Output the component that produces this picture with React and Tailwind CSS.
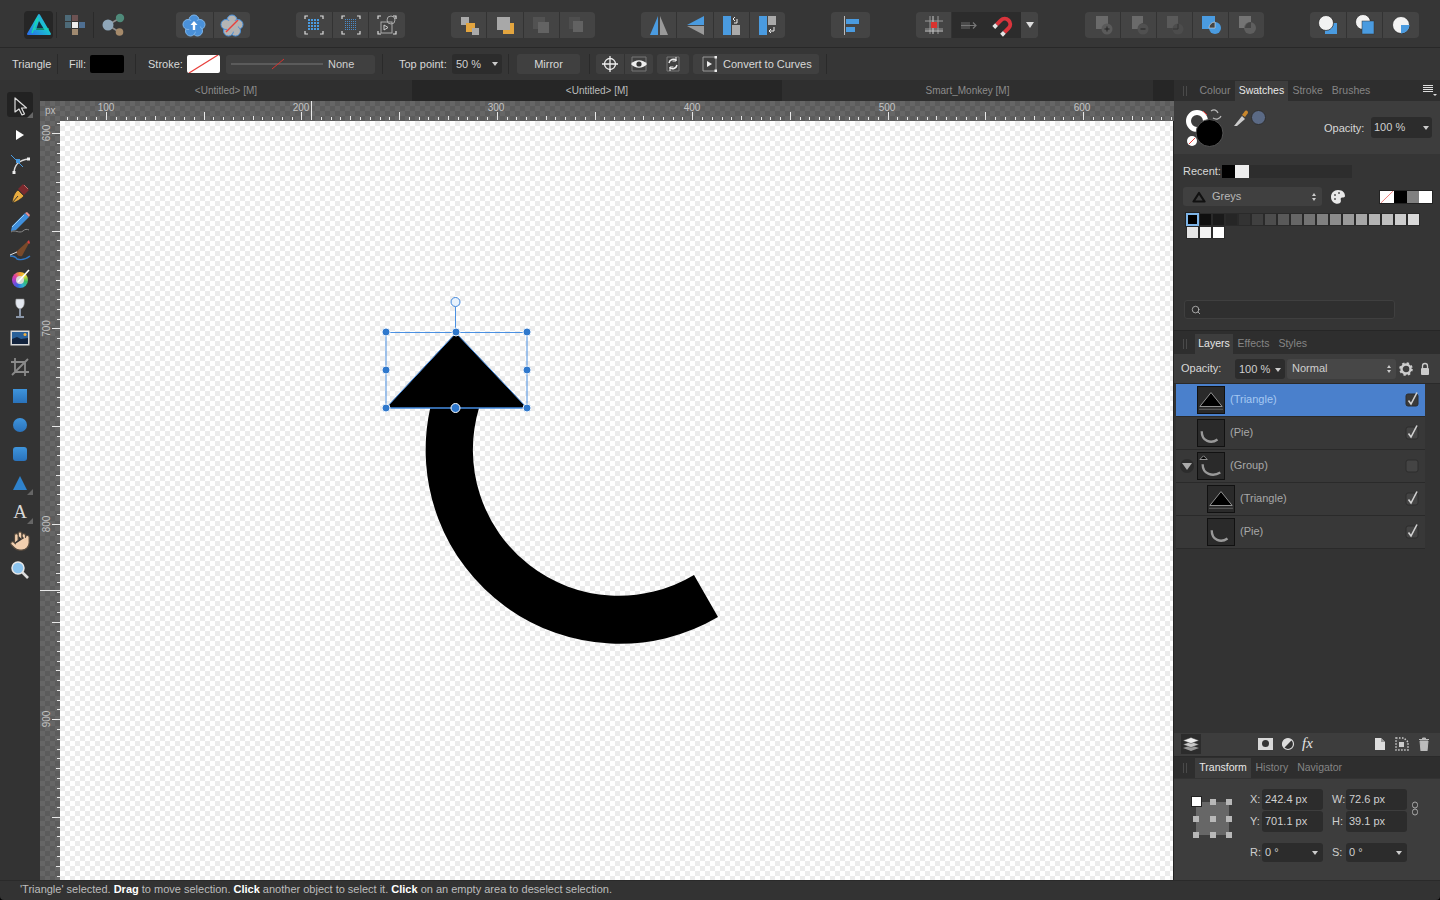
import React from "react";
import { Hand, Search } from "lucide-react";

const Ico = ({ children, w = 24, h = 24, className = "" }) => (
  <svg width={w} height={h} viewBox={`0 0 ${w} ${h}`} className={className}>
    {children}
  </svg>
);

const Dots = ({ step = 3, fill = "#4a9be0" }) => {
  const out = [];
  for (let x = 6; x <= 17; x += step) {
    for (let y = 6; y <= 17; y += step) {
      out.push(<rect key={`${x}-${y}`} x={x} y={y} width={step - 1} height={step - 1} fill={fill} />);
    }
  }
  return out;
};

const Brackets = () => (
  <path d="M3 6V3h3M18 3h3v3M21 18v3h-3M6 21H3v-3" fill="none" stroke="#ddd" strokeWidth="1.2" />
);

const Flower = ({ fill, stroke, children }) => (
  <Ico>
    <g fill={fill} stroke={stroke} strokeWidth="1">
      <circle cx="12" cy="7" r="5" />
      <circle cx="18" cy="11.5" r="5" />
      <circle cx="15.5" cy="18" r="5" />
      <circle cx="8.5" cy="18" r="5" />
      <circle cx="6" cy="11.5" r="5" />
    </g>
    <circle cx="12" cy="13" r="6" fill={fill} />
    {children}
  </Ico>
);

const Btn = ({ children, className = "" }) => (
  <div className={`flex-1 flex items-center justify-center border-r last:border-r-0 border-[#333] ${className}`}>
    {children}
  </div>
);

const Group = ({ className = "", children }) => (
  <div className={`flex h-[26px] shrink-0 rounded-[4px] bg-[#444] overflow-hidden ${className}`}>{children}</div>
);

const TopBar = () => (
  <div className="flex items-center h-[48px] pt-[2px] shrink-0 border-b border-[#282828] bg-[#363636]">
    <div className="ml-[24px] w-[29px] h-[28px] shrink-0 flex items-center justify-center rounded-[4px] bg-[#262626]">
      <Ico w={26} h={24}>
        <defs>
          <linearGradient id="logo" x1="0" y1="1" x2="1" y2="0">
            <stop offset="0" stopColor="#2a6fe8" />
            <stop offset="0.55" stopColor="#19c4d0" />
            <stop offset="1" stopColor="#3a9ae8" />
          </linearGradient>
        </defs>
        <path d="M13 2 24 21H2Z" fill="url(#logo)" stroke="url(#logo)" strokeWidth="2" strokeLinejoin="round" />
        <path d="M13 8 18.500 17H10Z" fill="#12303f" />
        <path d="M12 5 6 20M8 16h15" fill="none" stroke="#14e0a8" strokeWidth="1.200" />
      </Ico>
    </div>
    <div className="ml-[3px] w-px h-[26px] bg-[#2a2a2a]" />
    <div className="ml-[5px] w-[26px] h-[26px] shrink-0 flex items-center justify-center">
      <Ico>
        <rect x="9" y="2" width="6" height="6" fill="#6d5252" />
        <rect x="2" y="9" width="6" height="6" fill="#4d6a78" />
        <rect x="2" y="2" width="6" height="6" fill="#4d6a78" />
        <rect x="9" y="9" width="6" height="6" fill="#eee" />
        <rect x="16" y="9" width="6" height="6" fill="#4f6f92" />
        <rect x="9" y="16" width="6" height="6" fill="#a08a70" />
      </Ico>
    </div>
    <div className="ml-[5px] w-px h-[26px] bg-[#2a2a2a]" />
    <div className="ml-[5px] w-[28px] h-[26px] shrink-0 flex items-center justify-center">
      <Ico w={26} h={26}>
        <path d="M8 13 20 6M8 13l11 7" stroke="#8c8c8c" strokeWidth="1.5" />
        <circle cx="8" cy="13" r="5.5" fill="#8fa6b8" />
        <circle cx="20" cy="6" r="4.2" fill="#4f8a7a" />
        <circle cx="19.5" cy="20" r="3.8" fill="#a58a6a" />
      </Ico>
    </div>

    <Group className="ml-[49px] w-[74px]">
      <Btn>
        <Flower fill="#4a90d8" stroke="#7db4e8">
          <path d="M12 8l3.5 4H13.2v5h-2.4v-5H8.500Z" fill="#fff" />
        </Flower>
      </Btn>
      <Btn>
        <Flower fill="#b4b4b4" stroke="#4a90d8">
          <path d="M6 19 18 7" stroke="#e8403c" strokeWidth="1.5" />
        </Flower>
      </Btn>
    </Group>

    <Group className="ml-[46px] w-[109px]">
      <Btn>
        <Ico><Brackets /><Dots /></Ico>
      </Btn>
      <Btn>
        <Ico><Brackets /><Dots step={2} fill="#4a8ac8" /></Ico>
      </Btn>
      <Btn>
        <Ico>
          <Brackets />
          <rect x="6" y="9" width="11" height="11" fill="none" stroke="#aaa" />
          <circle cx="16" cy="7" r="4" fill="none" stroke="#aaa" />
          <path d="M9 12v5l4-2.500Z" fill="none" stroke="#ccc" />
        </Ico>
      </Btn>
    </Group>

    <Group className="ml-[46px] w-[144px]">
      <Btn>
        <Ico>
          <rect x="4" y="4" width="8" height="8" fill="#aaa" />
          <rect x="9" y="10" width="9" height="9" fill="#e3a53f" />
          <rect x="15" y="15" width="7" height="7" fill="#aaa" />
        </Ico>
      </Btn>
      <Btn>
        <Ico>
          <rect x="10" y="10" width="11" height="11" fill="#e3a53f" />
          <rect x="4" y="4" width="13" height="13" fill="#a8a8a8" />
        </Ico>
      </Btn>
      <Btn>
        <Ico>
          <rect x="4" y="4" width="12" height="12" fill="#525252" />
          <rect x="9" y="9" width="11" height="11" fill="#636363" />
        </Ico>
      </Btn>
      <Btn>
        <Ico>
          <path d="M4 4h11v4H8v8H4Z" fill="#4e4e4e" />
          <rect x="8" y="8" width="10" height="11" fill="#626262" />
        </Ico>
      </Btn>
    </Group>

    <Group className="ml-[46px] w-[144px]">
      <Btn>
        <Ico>
          <path d="M11 3v19H3Z" fill="#4a9be0" />
          <path d="M13 3v19h8Z" fill="#9a9a9a" />
        </Ico>
      </Btn>
      <Btn>
        <Ico>
          <path d="M21 3v9H4Z" fill="#4a9be0" />
          <path d="M21 13v9L4 13Z" fill="#9a9a9a" />
        </Ico>
      </Btn>
      <Btn>
        <Ico>
          <rect x="4" y="3" width="8" height="19" fill="#4a9be0" />
          <rect x="13" y="12" width="8" height="10" fill="#aaa" />
          <path d="M15 9h3V5M16 3l-2 2 2 2" transform="translate(0 1)" fill="none" stroke="#eee" />
        </Ico>
      </Btn>
      <Btn>
        <Ico>
          <rect x="4" y="3" width="8" height="19" fill="#4a9be0" />
          <rect x="13" y="3" width="8" height="9" fill="#aaa" />
          <path d="M19 14v4h-4M16 16l-2 2 2 2" fill="none" stroke="#eee" />
        </Ico>
      </Btn>
    </Group>

    <Group className="ml-[46px] w-[39px]">
      <Btn>
        <Ico>
          <path d="M5.500 3v19" stroke="#bbb" />
          <rect x="7" y="6" width="13" height="5" fill="#4a9be0" />
          <rect x="7" y="14" width="9" height="5" fill="#4a9be0" />
        </Ico>
      </Btn>
    </Group>

    <Group className="ml-[46px] w-[122px]">
      <div className="w-[36px] flex items-center justify-center border-r border-[#333]">
        <Ico>
          <path d="M8 3v18M16 3v18M3 8h18M3 16h18" stroke="#999" />
          <path d="M3 18h18M11 3v18" stroke="#ccc" />
          <rect x="9" y="9" width="6" height="6" fill="#d8322e" />
        </Ico>
      </div>
      <div className="w-[34px] flex items-center justify-center bg-[#2c2c2c]">
        <Ico>
          <rect x="4" y="9" width="9" height="7" fill="#4a4a4a" />
          <path d="M4 12.500h15M16 9.500l3 3-3 3" fill="none" stroke="#777" strokeWidth="1.2" />
        </Ico>
      </div>
      <div className="w-[35px] flex items-center justify-center bg-[#2c2c2c]">
        <Ico>
          <g transform="rotate(-135 12 12)" fill="none" strokeWidth="4">
            <path d="M6.500 7v6a5.500 5.500 0 0 0 11 0V7" stroke="#d9343c" />
            <path d="M6.500 3v4M17.500 3v4" stroke="#e4e4e4" />
          </g>
        </Ico>
      </div>
      <div className="flex-1 flex items-center justify-center bg-[#444]">
        <div className="w-0 h-0 border-x-[4px] border-x-transparent border-t-[6px] border-t-[#ddd]" />
      </div>
    </Group>

    <Group className="ml-[47px] w-[179px]">
      <Btn>
        <Ico>
          <rect x="5" y="3" width="12" height="13" fill="#6a6a6a" />
          <circle cx="16" cy="16" r="5.500" fill="#5a5a5a" />
          <path d="M13.500 16h5M16 13.500v5" stroke="#222" />
        </Ico>
      </Btn>
      <Btn>
        <Ico>
          <path d="M5 3h11v7a6 6 0 0 0-5 6H5Z" fill="#6a6a6a" />
          <circle cx="16" cy="16" r="5.500" fill="#505050" />
          <path d="M13.500 16h5" stroke="#222" />
        </Ico>
      </Btn>
      <Btn>
        <Ico>
          <rect x="4" y="3" width="11" height="12" fill="#5a5a5a" />
          <circle cx="15" cy="16" r="5.500" fill="#4c4c4c" />
          <path d="M15 11v5h-5" fill="none" stroke="#333" />
        </Ico>
      </Btn>
      <Btn>
        <Ico>
          <rect x="3" y="3" width="13" height="13" fill="#4a9be0" />
          <circle cx="16" cy="15" r="6" fill="#4a9be0" />
          <path d="M10 15a6 6 0 0 1 6-6v6Z" fill="#444" stroke="#ddd" strokeWidth=".6" />
        </Ico>
      </Btn>
      <Btn>
        <Ico>
          <rect x="4" y="3" width="12" height="12" fill="#747474" />
          <circle cx="15" cy="15" r="6" fill="#5e5e5e" />
          <path d="M10 15a6 6 0 0 1 6-6v6Z" fill="#444" />
        </Ico>
      </Btn>
    </Group>

    <Group className="ml-[46px] w-[109px]">
      <Btn>
        <Ico>
          <rect x="9" y="10" width="12" height="11" fill="#4a9be0" />
          <circle cx="10" cy="10" r="7.500" fill="#f2f2f2" stroke="#222" strokeWidth=".7" />
        </Ico>
      </Btn>
      <Btn>
        <Ico>
          <circle cx="10" cy="9" r="7.500" fill="#f2f2f2" stroke="#222" strokeWidth=".7" />
          <rect x="9" y="8" width="12" height="13" fill="#4a9be0" stroke="#333" strokeWidth=".5" />
        </Ico>
      </Btn>
      <Btn>
        <Ico>
          <circle cx="12" cy="12" r="8.500" fill="#f2f2f2" stroke="#222" strokeWidth=".7" />
          <path d="M12 12h8.500a8.500 8.500 0 0 1-8.500 8.500Z" fill="#4a9be0" />
        </Ico>
      </Btn>
    </Group>
  </div>
);

const Sep = ({ className = "" }) => <div className={`w-px h-[20px] shrink-0 bg-[#2a2a2a] ${className}`} />;
const Lab = ({ className = "", children }) => (
  <span className={`shrink-0 whitespace-nowrap text-[11px] text-[#d8d8d8] ${className}`}>{children}</span>
);
const Caret = ({ className = "" }) => (
  <div className={`w-0 h-0 border-x-[3px] border-x-transparent border-t-[4px] border-t-[#ccc] ${className}`} />
);

const NoneSwatch = ({ className = "" }) => (
  <svg viewBox="0 0 33 17" preserveAspectRatio="none" className={`bg-white shrink-0 ${className}`}>
    <path d="M2 17 31 0" stroke="#e8403c" strokeWidth="1.2" />
  </svg>
);

const ContextBar = () => (
  <div className="flex items-center h-[32px] shrink-0 bg-[#363636]">
    <Lab className="ml-[12px] w-[38px]">Triangle</Lab>
    <Sep className="ml-[7px]" />
    <Lab className="ml-[11px] w-[17px]">Fill:</Lab>
    <div className="ml-[4px] w-[34px] h-[18px] shrink-0 bg-black rounded-[2px]" />
    <Sep className="ml-[11px]" />
    <Lab className="ml-[12px] w-[34px]">Stroke:</Lab>
    <NoneSwatch className="ml-[5px] w-[33px] h-[18px] rounded-[2px]" />
    <div className="ml-[6px] w-[149px] h-[19px] shrink-0 flex items-center rounded-[3px] bg-[#404040]">
      <svg width="97" height="12" className="ml-[5px]">
        <path d="M0 6h92" stroke="#777" />
        <path d="M41 11 53 1" stroke="#d8322e" />
      </svg>
      <span className="text-[11px] text-[#d0d0d0]">None</span>
    </div>
    <Sep className="ml-[7px]" />
    <Lab className="ml-[16px] w-[48px]">Top point:</Lab>
    <div className="ml-[5px] w-[50px] h-[20px] shrink-0 flex items-center justify-between rounded-[3px] bg-[#2c2c2c] pl-[4px] pr-[4px]">
      <span className="text-[11px] text-[#d0d0d0]">50 %</span>
      <Caret />
    </div>
    <Sep className="ml-[6px]" />
    <div className="ml-[8px] w-[63px] h-[20px] shrink-0 flex items-center justify-center rounded-[3px] bg-[#404040] text-[11px] text-[#d8d8d8]">
      Mirror
    </div>
    <Sep className="ml-[9px]" />
    <div className="ml-[6px] w-[57px] h-[20px] shrink-0 flex rounded-[3px] bg-[#404040] divide-x divide-[#333]">
      <div className="flex-1 flex items-center justify-center">
        <Ico w={18} h={18}>
          <circle cx="9" cy="9" r="5.500" fill="none" stroke="#eee" strokeWidth="1.3" />
          <path d="M9 1v16M1 9h16" stroke="#eee" strokeWidth="1.3" />
        </Ico>
      </div>
      <div className="flex-1 flex items-center justify-center">
        <Ico w={18} h={18}>
          <path d="M2 2h14v14H2Z" fill="none" stroke="#777" />
          <path d="M1 9c4-5 12-5 16 0-4 5-12 5-16 0Z" fill="#eee" />
          <circle cx="9" cy="9" r="2.600" fill="#333" />
        </Ico>
      </div>
    </div>
    <div className="ml-[4px] w-[32px] h-[20px] shrink-0 flex items-center justify-center rounded-[3px] bg-[#404040]">
      <Ico w={18} h={18}>
        <path d="M3 2h12v14H3Z" fill="none" stroke="#777" />
        <path d="M5 8a4.500 4.500 0 0 1 7.500-2.500M13 10a4.500 4.500 0 0 1-7.500 2.500" fill="none" stroke="#eee" strokeWidth="1.500" />
        <path d="M12 2v4H8.500M6 16v-4h3.500" fill="none" stroke="#eee" />
      </Ico>
    </div>
    <div className="ml-[4px] w-[126px] h-[20px] shrink-0 flex items-center rounded-[3px] bg-[#404040]">
      <Ico w={18} h={18} className="ml-[8px]">
        <path d="M2 2h13M2 16h13M2 2v14M15 2v14" fill="none" stroke="#999" />
        <rect x="13.500" y="1" width="2.500" height="2.500" fill="#eee" />
        <rect x="13.500" y="14.500" width="2.500" height="2.500" fill="#eee" />
        <path d="M6 6v6l5-3Z" fill="#eee" />
      </Ico>
      <span className="ml-[4px] text-[11px] whitespace-nowrap text-[#d8d8d8]">Convert to Curves</span>
    </div>
    <Sep className="ml-[7px]" />
  </div>
);

const Tool = ({ children, active, corner }) => (
  <div className="relative h-[29px] flex items-center justify-center">
    {active && <div className="absolute left-[7px] top-[1px] w-[26px] h-[25px] rounded-[3px] bg-[#222]" />}
    <div className="relative flex">{children}</div>
    {corner && (
      <div className="absolute right-[7px] bottom-[2px] w-0 h-0 border-l-[6px] border-l-transparent border-b-[6px] border-b-[#666]" />
    )}
  </div>
);

const Toolbar = () => (
  <div className="w-[40px] shrink-0 flex flex-col pt-[11px] bg-[#333]">
    <Tool active corner>
      <Ico w={20} h={20}>
        <path d="M5 2v14l4-3 3 6 2.500-1-3-6h5Z" fill="#222" stroke="#ddd" strokeWidth="1.200" strokeLinejoin="round" />
      </Ico>
    </Tool>
    <Tool>
      <Ico w={20} h={20}>
        <path d="M6 5v10l8-5Z" fill="#fff" />
      </Ico>
    </Tool>
    <Tool>
      <Ico w={22} h={22}>
        <path d="M5 21c0-9 4-14 15-15" fill="none" stroke="#ddd" strokeWidth="1.500" />
        <path d="M2 2l12 12" stroke="#4a9be0" />
        <rect x="7" y="6" width="4" height="4" fill="#4a9be0" />
        <rect x="3.500" y="18" width="3" height="3" fill="#eee" />
        <rect x="18" y="4.500" width="3" height="3" fill="#eee" />
      </Ico>
    </Tool>
    <Tool>
      <Ico>
        <path d="M4 22C5 15 7 11 10 9l6 6c-3 3-7 6-12 7Z" fill="#e8ac40" stroke="#222" strokeWidth=".7" />
        <path d="M4 22l6-7" stroke="#333" />
        <path d="M10 8l5-5 6 6-5 5Z" fill="#7a2a2e" />
        <path d="M16 4l4 4" stroke="#c46a6a" />
      </Ico>
    </Tool>
    <Tool>
      <Ico>
        <path d="M4 16 17 3l4 4L8 20l-5 1Z" fill="#3f8fdc" />
        <path d="M17 3l4 4 1-2-3-3Z" fill="#e89090" />
        <path d="M4 17 16 5" stroke="#9fd0f5" />
        <path d="M3 22c4-3 8 2 12-1 2-2 4-2 6-1" fill="none" stroke="#888" />
      </Ico>
    </Tool>
    <Tool>
      <Ico>
        <path d="M8 13 19 3l2 1-7 13c-3 1-5-1-6-4Z" fill="#7a4a2a" />
        <path d="M19 3l2-2 1 3-1 1Z" fill="#d84040" />
        <path d="M2 17c3 0 6 1 7 3 3 1 8 1 13-3" fill="none" stroke="#2f78c8" strokeWidth="1.400" />
        <path d="M2 16l7-3" stroke="#ddd" />
      </Ico>
    </Tool>
    <Tool>
      <div className="relative w-[16px] h-[16px] rounded-full bg-[image:conic-gradient(#f0a030,#e8e040,#38c060,#30b0d0,#3a60e0,#a040d0,#e040a0,#f0a030)]">
        <div className="absolute inset-[4px] rounded-full bg-[#d8d8d8]" />
        <svg width="20" height="20" className="absolute left-[3px] -top-[5px]">
          <path d="M3 15 14 3" stroke="#fff" strokeWidth="1.600" />
        </svg>
      </div>
    </Tool>
    <Tool>
      <Ico>
        <path d="M8 2h8c1 5 0 9-4 10-4-1-5-5-4-10Z" fill="#e4e8f0" stroke="#888" strokeWidth=".6" />
        <path d="M12 12v7M8 20h8" stroke="#8a96a8" strokeWidth="2" />
      </Ico>
    </Tool>
    <Tool>
      <Ico w={20} h={16}>
        <rect x=".5" y=".5" width="19" height="15" fill="#d8d8d8" />
        <rect x="2" y="2" width="16" height="12" fill="#2a6098" />
        <path d="M2 9l5-2 4 2 7-1v6H2Z" fill="#12233d" />
        <circle cx="15" cy="4.500" r="1.500" fill="#f0b040" />
      </Ico>
    </Tool>
    <Tool>
      <Ico w={20} h={20}>
        <path d="M5 1v14h14M1 5h14v14M2 18 18 2" fill="none" stroke="#8a8a8a" strokeWidth="1.800" />
      </Ico>
    </Tool>
    <Tool>
      <div className="w-[14px] h-[14px] bg-gradient-to-b from-[#3f95dd] to-[#2a72bb]" />
    </Tool>
    <Tool>
      <div className="w-[14px] h-[14px] rounded-full bg-gradient-to-b from-[#3f95dd] to-[#2a72bb]" />
    </Tool>
    <Tool>
      <div className="w-[14px] h-[14px] rounded-[3px] bg-gradient-to-b from-[#3f95dd] to-[#2a72bb]" />
    </Tool>
    <Tool corner>
      <div className="w-0 h-0 border-x-[7px] border-x-transparent border-b-[14px] border-b-[#2f82cc]" />
    </Tool>
    <Tool corner>
      <span className="font-['Liberation_Serif',serif] text-[19px] leading-none text-[#d8d8d8]">A</span>
    </Tool>
    <Tool>
      <Hand size={22} fill="#f2cfae" stroke="#54483c" strokeWidth={1.300} />
    </Tool>
    <Tool>
      <Ico w={20} h={20}>
        <path d="M12 12l6 6" stroke="#ddd" strokeWidth="2.600" />
        <circle cx="8" cy="8" r="6" fill="#8cc4ee" stroke="#e8e8e8" strokeWidth="1.500" />
      </Ico>
    </Tool>
  </div>
);

const TOP_LABELS = [
  [106, "100"],
  [301, "200"],
  [496, "300"],
  [692, "400"],
  [887, "500"],
  [1082, "600"],
];
const SIDE_LABELS = [
  [133, "600"],
  [328.5, "700"],
  [524, "800"],
  [719, "900"],
];
const tickSize = (i) => (i % 10 === 0 ? 8 : i % 5 === 0 ? 4 : 3);

const TopRuler = () => (
  <svg className="flex-1 block" height="20" viewBox="60 101 1114 20" preserveAspectRatio="xMinYMin slice">
    {Array.from({ length: 116 }, (_, i) => {
      const x = Math.round(106 + (i - 5) * 9.77) + 0.5;
      return <path key={i} d={`M${x} 120V${120 - tickSize(i - 5 + 100)}`} stroke="#e8e8e8" />;
    })}
    <path d="M311.500 101v19" stroke="#e8e8e8" />
    {TOP_LABELS.map(([x, t]) => (
      <text key={t} x={x} y="111" textAnchor="middle" fontSize="10" fill="#c4c4c4">
        {t}
      </text>
    ))}
  </svg>
);

const SideRuler = () => (
  <div className="w-[20px] shrink-0 bg-[#606060] bg-[image:repeating-conic-gradient(#5c5c5c_0_25%,#666_0_50%)] bg-[length:10px_10px] overflow-hidden">
    <svg width="20" height="758" viewBox="40 121 20 758" className="block">
      {Array.from({ length: 78 }, (_, i) => {
        const y = Math.round(133 + (i - 1) * 9.77) + 0.5;
        return <path key={i} d={`M60 ${y}H${60 - tickSize(i - 1 + 100)}`} stroke="#e8e8e8" />;
      })}
      <path d="M40 590.500h20" stroke="#e8e8e8" />
      {SIDE_LABELS.map(([y, t]) => (
        <text key={t} x="50" y={y} textAnchor="middle" fontSize="10" fill="#c4c4c4" transform={`rotate(-90 50 ${y})`}>
          {t}
        </text>
      ))}
    </svg>
  </div>
);

const HANDLES = [
  [386, 332],
  [456, 332],
  [527, 332],
  [386, 370],
  [527, 370],
  [386, 408],
  [527, 408],
];

const Canvas = () => (
  <div className="relative flex-1 bg-white bg-[image:repeating-conic-gradient(#ececec_0_25%,#fff_0_50%)] bg-[length:10px_10px]">
    <svg className="absolute inset-0" width="1113" height="758" viewBox="60 121 1113 758">
      <path d="M430.200 408A194 194 0 0 0 718 617L694 575A146 146 0 0 1 479 408Z" fill="#000" />
      <path d="M456 333 386 408H527Z" fill="#000" stroke="#3f86dc" />
      <rect x="386" y="332.500" width="141" height="75.500" fill="none" stroke="#4a90e2" />
      <path d="M455.500 307v25" stroke="#4a90e2" />
      <circle cx="455.500" cy="302" r="4.500" fill="#e8f2fc" stroke="#3f86dc" />
      {HANDLES.map(([x, y]) => (
        <circle key={`${x}-${y}`} cx={x} cy={y} r="4" fill="#2f78cc" stroke="#eef4fc" />
      ))}
      <circle cx="455.500" cy="408" r="4.500" fill="#2f78cc" stroke="#fff" />
    </svg>
  </div>
);

const DocArea = () => (
  <div className="flex-1 flex flex-col min-w-0">
    <div className="flex h-[21px] shrink-0 bg-[#262626] text-[10px] text-center leading-[21px]">
      <div className="w-[372px] bg-[#2f2f2f] text-[#8c8c8c]">&lt;Untitled&gt; [M]</div>
      <div className="w-[370px] text-[#bcbcbc]">&lt;Untitled&gt; [M]</div>
      <div className="w-[371px] bg-[#2f2f2f] text-[#8c8c8c]">Smart_Monkey [M]</div>
    </div>
    <div className="flex h-[20px] shrink-0 bg-[#606060] bg-[image:repeating-conic-gradient(#5c5c5c_0_25%,#666_0_50%)] bg-[length:10px_10px]">
      <div className="w-[20px] shrink-0 pl-[5px] text-[10px] leading-[20px] text-[#c0c0c0]">px</div>
      <TopRuler />
    </div>
    <div className="flex flex-1 min-h-0 border-r border-[#222]">
      <SideRuler />
      <Canvas />
    </div>
  </div>
);

const PanelTabs = ({ tabs, active, activeWidth, className = "" }) => (
  <div className={`flex items-end h-[21px] shrink-0 bg-[#2e2e2e] text-[10.500px] ${className}`}>
    <div className="ml-[9px] mb-[5px] w-[4px] h-[10px] border-x border-[#4a4a4a]" />
    <div className="ml-[8px] flex h-[20px] items-center">
      {tabs.map((t, i) => (
        <div
          key={t}
          className={
            i === active
              ? `flex h-full items-center justify-center bg-[#3d3d3d] text-[#e8e8e8] ${activeWidth}`
              : "flex h-full items-center px-[4.500px] text-[#858585]"
          }
        >
          {t}
        </div>
      ))}
    </div>
  </div>
);

const GREYS = [
  "#000", "#0f0f0f", "#1a1a1a", "#262626", "#333", "#404040", "#4d4d4d", "#595959", "#666", "#737373",
  "#808080", "#8c8c8c", "#999", "#a6a6a6", "#b3b3b3", "#bfbfbf", "#ccc", "#d9d9d9", "#e6e6e6", "#f2f2f2", "#fff",
];

const Dark = ({ className = "", children }) => (
  <div className={`flex items-center shrink-0 rounded-[3px] bg-[#2c2c2c] text-[11px] text-[#cfcfcf] ${className}`}>
    {children}
  </div>
);

const Stepper = () => (
  <div className="flex flex-col gap-[2px]">
    <div className="w-0 h-0 border-x-[2.5px] border-x-transparent border-b-[3px] border-b-[#ccc]" />
    <div className="w-0 h-0 border-x-[2.5px] border-x-transparent border-t-[3px] border-t-[#ccc]" />
  </div>
);

const SwatchPanel = () => (
  <div className="flex flex-col h-[251px] shrink-0 border-b border-[#262626] bg-[#353535]">
    <div className="relative">
      <PanelTabs tabs={["Colour", "Swatches", "Stroke", "Brushes"]} active={1} activeWidth="w-[53px]" />
      <svg width="14" height="12" className="absolute right-[3px] top-[4px]">
        <path d="M0 1.500h10M0 3.500h10M0 5.500h10M0 7.500h10" stroke="#ddd" />
        <path d="M10 10h4l-2 2Z" fill="#ddd" />
      </svg>
    </div>
    <div className="flex items-start h-[53px] shrink-0 bg-[#3d3d3d]">
      <svg width="49" height="46" viewBox="0 0 49 46" className="ml-[10px] mt-[7px] shrink-0">
        <circle cx="13" cy="13" r="8.500" fill="none" stroke="#fff" strokeWidth="5" />
        <path d="M19 3 23 7" stroke="#e8403c" />
        <circle cx="25.500" cy="25" r="13.500" fill="#000" stroke="#555" />
        <circle cx="8" cy="33" r="5" fill="#fff" />
        <path d="M5 36l6-6" stroke="#e8403c" />
        <path d="M27 3c3-2 6-1 7 2M37 8c-1 3-5 4-8 2" fill="none" stroke="#bbb" strokeWidth="1.200" />
      </svg>
      <svg width="16" height="18" className="mt-[8px] shrink-0">
        <path d="M1 17 9 7l3 3-8 7Z" fill="#ccc" />
        <path d="M9 6l3-4c2-1 3 0 3 2l-3 4Z" fill="#c9872c" />
      </svg>
      <div className="ml-[2px] mt-[9px] w-[15px] h-[15px] shrink-0 rounded-full bg-[#5b6a85] border border-[#2f2f2f]" />
      <Lab className="ml-[58px] mt-[19px] w-[40px]">Opacity:</Lab>
      <Dark className="ml-[7px] mt-[16px] w-[61px] h-[21px] justify-between px-[3px]">
        100 %
        <Caret />
      </Dark>
    </div>
    <div className="flex items-center mt-[11px] ml-[9px] h-[13px]">
      <Lab className="w-[39px]">Recent:</Lab>
      <div className="flex w-[130px] h-[13px] bg-[#2d2d2d]">
        <div className="w-[13px] bg-black" />
        <div className="w-[14px] bg-[#eee]" />
      </div>
    </div>
    <div className="flex items-center mt-[9px] ml-[9px]">
      <div className="flex items-center w-[139px] h-[19px] rounded-[3px] bg-[#404040] text-[11px] text-[#b8b8b8]">
        <svg width="14" height="12" className="ml-[9px]">
          <path d="M7 2 12.500 10.500H1.500Z" fill="none" stroke="#111" strokeWidth="2.200" strokeLinejoin="round" />
        </svg>
        <span className="ml-[6px] flex-1">Greys</span>
        <div className="mr-[6px]">
          <Stepper />
        </div>
      </div>
      <svg width="16" height="16" className="ml-[8px]">
        <path d="M8 1c5 0 7 3 7 6 0 2-3 1-4 2s1 3-1 5c-3 2-9 0-9-6 0-4 3-7 7-7Z" fill="#e8e8e8" />
        <circle cx="5" cy="6" r="1" fill="#555" />
        <circle cx="9" cy="4" r="1" fill="#555" />
        <circle cx="5" cy="10" r="1" fill="#555" />
      </svg>
      <div className="ml-[33px] flex w-[54px] h-[14px] border border-[#222]">
        <NoneSwatch className="w-[14px] h-full" />
        <div className="w-[13px] bg-black" />
        <div className="w-[13px] bg-[#808080]" />
        <div className="w-[13px] bg-white" />
      </div>
    </div>
    <div className="flex flex-wrap w-[234px] ml-[12px] mt-[7px]">
      {GREYS.map((c, i) => (
        <div
          key={i}
          className={i === 0 ? "w-[13px] h-[13px] border-2 border-[#7db4e8] outline outline-[#222]" : "w-[13px] h-[13px] border border-[#2a2a2a]"}
          style={{ backgroundColor: c }}
        />
      ))}
    </div>
    <div className="flex items-center ml-[10px] mt-[61px] w-[211px] h-[19px] rounded-[3px] bg-[#2f2f2f] border border-[#3f3f3f]">
      <Search size={10} className="ml-[6px] text-[#bbb]" />
    </div>
  </div>
);

const Thumb = ({ kind }) => (
  <svg width="28" height="28" viewBox="0 0 28 28" className="shrink-0 bg-[#2a2a2a] border border-[#111]">
    {kind === "tri" && (
      <>
        <path d="M14 6 2 21h24Z" fill="#000" stroke="#999" />
        <path d="M1 24h26" stroke="#666" />
      </>
    )}
    {kind === "pie" && <path d="M4 12c0 11 10 14 17 9" fill="none" stroke="#999" strokeWidth="2.500" />}
    {kind === "group" && (
      <>
        <path d="M6 3 2 7h8Z" fill="#000" stroke="#999" />
        <path d="M5 12c0 11 11 14 19 9" fill="none" stroke="#999" strokeWidth="2.500" />
      </>
    )}
  </svg>
);

const Check = ({ on, box }) => (
  <svg width="14" height="16" viewBox="0 0 14 16" className="shrink-0">
    <rect x="1" y="3" width="12" height="12" rx="2" fill={box} stroke="#2c2c2c" />
    {on && <path d="M3.500 9.500 6 13 12 1.500" fill="none" stroke="#d0d0d0" strokeWidth="1.600" />}
  </svg>
);

const LayerRow = ({ name, kind, selected, indent, caret, on = true }) => (
  <div className={`flex items-center h-[33px] shrink-0 border-b border-[#2a2a2a] ${selected ? "bg-[#4a80cc]" : "bg-[#383838]"}`}>
    <div className={indent ? "w-[31px] shrink-0 flex justify-center" : "w-[21px] shrink-0 flex justify-center"}>
      {caret && (
        <div className="flex items-center justify-center w-[14px] h-[14px] rounded-full bg-[#2c2c2c]">
          <div className="w-0 h-0 border-x-[5px] border-x-transparent border-t-[7px] border-t-[#aaa]" />
        </div>
      )}
    </div>
    <Thumb kind={kind} />
    <span className={`ml-[5px] mb-[2px] flex-1 text-[11px] ${selected ? "text-[#a6c8f2]" : "text-[#a8a8a8]"}`}>{name}</span>
    <div className="mr-[6px] mb-[3px]">
      <Check on={on} box={selected ? "#3a3a3a" : "#444"} />
    </div>
  </div>
);

const LayersPanel = () => (
  <div className="flex flex-col flex-1 min-h-0 bg-[#353535]">
    <PanelTabs tabs={["Layers", "Effects", "Styles"]} active={0} activeWidth="w-[38px]" className="h-[23px]" />
    <div className="flex items-center h-[30px] shrink-0 bg-[#3d3d3d] border-b border-[#2a2a2a]">
      <Lab className="ml-[7px] w-[54px]">Opacity:</Lab>
      <Dark className="w-[50px] h-[20px] justify-between px-[4px] pt-[2px]">
        100 %
        <Caret />
      </Dark>
      <div className="ml-[2px] flex items-center justify-between w-[109px] h-[20px] rounded-[3px] bg-[#474747] px-[5px] text-[11px] text-[#cfcfcf]">
        Normal
        <Stepper />
      </div>
      <svg width="14" height="14" className="ml-[3px]">
        <circle cx="7" cy="7" r="5.500" fill="none" stroke="#ccc" strokeWidth="2.600" strokeDasharray="2.200 2.120" />
        <circle cx="7" cy="7" r="4.500" fill="none" stroke="#ccc" strokeWidth="2.400" />
      </svg>
      <svg width="12" height="14" className="ml-[6px]">
        <path d="M3.500 6V4a2.500 2.500 0 0 1 5 0v2" fill="none" stroke="#ccc" strokeWidth="1.300" />
        <rect x="2" y="6" width="8" height="7" rx="1" fill="#ccc" />
      </svg>
    </div>
    <div className="flex flex-col flex-1 pl-[2px] pr-[15px] bg-[#333]">
      <LayerRow name="(Triangle)" kind="tri" selected />
      <LayerRow name="(Pie)" kind="pie" />
      <LayerRow name="(Group)" kind="group" caret on={false} />
      <LayerRow name="(Triangle)" kind="tri" indent />
      <LayerRow name="(Pie)" kind="pie" indent />
    </div>
    <div className="flex items-center h-[24px] pb-[2px] shrink-0 bg-[#3d3d3d] border-b border-[#2a2a2a]">
      <div className="ml-[7px] w-[20px] h-[20px] flex items-center justify-center bg-[#2c2c2c]">
        <svg width="18" height="16">
          <path d="M9 9.500 17 12 9 15 1 12Z" fill="#999" />
          <path d="M9 5.500 17 8.500 9 11.500 1 8.500Z" fill="#c8c8c8" stroke="#333" strokeWidth=".5" />
          <path d="M9 1.500 17 4.500 9 7.500 1 4.500Z" fill="#eee" stroke="#333" strokeWidth=".5" />
        </svg>
      </div>
      <div className="ml-[57px] w-[15px] h-[12px] flex items-center justify-center bg-[#d8d8d8]">
        <div className="w-[7px] h-[7px] rounded-full bg-[#333]" />
      </div>
      <svg width="14" height="14" className="ml-[8px]">
        <circle cx="7" cy="7" r="5.500" fill="#333" stroke="#ddd" strokeWidth="1.200" />
        <path d="M7 1.500a5.500 5.500 0 0 0-3.900 9.400L10.900 3.100A5.500 5.500 0 0 0 7 1.500Z" fill="#ddd" />
      </svg>
      <span className="ml-[7px] w-[16px] font-['Liberation_Serif',serif] italic text-[15px] leading-none text-[#e4e4e4]">fx</span>
      <svg width="12" height="14" className="ml-[56px]">
        <path d="M1 1h6l4 4v8H1Z" fill="#ddd" />
        <path d="M7 1v4h4" fill="#999" />
      </svg>
      <svg width="14" height="14" className="ml-[9px]">
        <path d="M1 1h8l4 4v8H1Z" fill="#444" stroke="#ccc" strokeDasharray="1.500 1.500" strokeWidth="1.500" />
        <rect x="4" y="5" width="5" height="5" fill="#ccc" />
      </svg>
      <svg width="12" height="14" className="ml-[9px]">
        <path d="M2 4h8l-1 10H3ZM1 2.500h10M4.500 2.500V1h3v1.500" fill="#bbb" stroke="#bbb" />
      </svg>
    </div>
  </div>
);

const Field = ({ label, value, caret, className = "" }) => (
  <div className={`flex items-center ${className}`}>
    <span className="w-[12px] text-[11px] text-[#cfcfcf]">{label}</span>
    <Dark className={`w-[61px] justify-between pl-[3px] pr-[5px] ${caret ? "h-[19px]" : "h-[21px]"}`}>
      {value}
      {caret && <Caret />}
    </Dark>
  </div>
);

const TransformPanel = () => (
  <div className="flex flex-col h-[123px] shrink-0 bg-[#3d3d3d]">
    <PanelTabs tabs={["Transform", "History", "Navigator"]} active={0} activeWidth="w-[56px]" />
    <div className="flex flex-1 min-h-0 border-t border-[#333]">
      <svg width="44" height="46" viewBox="0 0 44 46" className="ml-[17px] mt-[17px] shrink-0">
        <rect x="5" y="6" width="33" height="33" fill="#676767" />
        {[22, 38].map((x) => (
          <rect key={x} x={x - 3} y="3" width="6" height="6" fill="#b8b8b8" />
        ))}
        {[5, 22, 38].map((x) => (
          <rect key={x} x={x - 3} y="20" width="6" height="6" fill="#b8b8b8" />
        ))}
        {[5, 22, 38].map((x) => (
          <rect key={x} x={x - 3} y="36" width="6" height="6" fill="#b8b8b8" />
        ))}
        <rect x="0.500" y="0.500" width="10" height="10" fill="#fff" stroke="#222" />
      </svg>
      <div className="flex flex-col ml-[15px] pt-[10px]">
        <div className="flex">
          <Field label="X:" value="242.4 px" />
          <Field label="W:" value="72.6 px" className="ml-[9px] [&>span]:w-[14px]" />
        </div>
        <div className="flex mt-[1px]">
          <Field label="Y:" value="701.1 px" />
          <Field label="H:" value="39.1 px" className="ml-[9px] [&>span]:w-[14px]" />
        </div>
        <div className="flex mt-[11px]">
          <Field label="R:" value="0 °" caret />
          <Field label="S:" value="0 °" caret className="ml-[9px] [&>span]:w-[14px]" />
        </div>
      </div>
      <svg width="8" height="16" className="ml-[4px] mt-[22px] shrink-0">
        <rect x="1.500" y="1" width="5" height="6" rx="2.500" fill="none" stroke="#aaa" />
        <rect x="1.500" y="8" width="5" height="6" rx="2.500" fill="none" stroke="#aaa" />
      </svg>
    </div>
  </div>
);

const RightPanel = () => (
  <div className="w-[266px] shrink-0 flex flex-col min-h-0">
    <SwatchPanel />
    <LayersPanel />
    <TransformPanel />
  </div>
);

const StatusBar = () => (
  <div className="flex items-center h-[20px] pb-[2px] shrink-0 pl-[20px] text-[11px] text-[#bdbdbd] border-t border-[#2a2a2a] bg-[#333] rounded-b-[4px]">
    <span>
      'Triangle' selected. <b className="text-white">Drag</b> to move selection. <b className="text-white">Click</b> another
      object to select it. <b className="text-white">Click</b> on an empty area to deselect selection.
    </span>
  </div>
);

export default function App() {
  return (
    <div className="flex flex-col w-full h-screen overflow-hidden bg-black font-['Liberation_Sans',sans-serif]">
      <div className="flex flex-col flex-1 min-h-0 bg-[#333]">
        <TopBar />
        <ContextBar />
        <div className="flex flex-1 min-h-0">
          <Toolbar />
          <DocArea />
          <RightPanel />
        </div>
      </div>
      <StatusBar />
    </div>
  );
}
